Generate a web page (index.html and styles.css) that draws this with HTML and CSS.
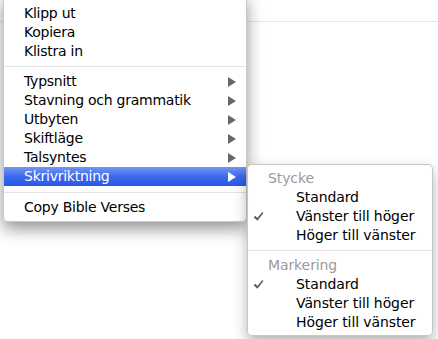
FILE: index.html
```html
<!DOCTYPE html>
<html lang="sv">
<head>
<meta charset="utf-8">
<link rel="stylesheet" href="styles.css">
</head>
<body>
<div class="page">
  <div class="ghost">Ingen markering.</div>
  <div class="rule"></div>
</div>

<div class="menu main">
  <div class="item">Klipp ut</div>
  <div class="item">Kopiera</div>
  <div class="item">Klistra in</div>
  <div class="sep"></div>
  <div class="item sub">Typsnitt<span class="arrow"></span></div>
  <div class="item sub">Stavning och grammatik<span class="arrow"></span></div>
  <div class="item sub">Utbyten<span class="arrow"></span></div>
  <div class="item sub">Skiftläge<span class="arrow"></span></div>
  <div class="item sub">Talsyntes<span class="arrow"></span></div>
  <div class="item sub active">Skrivriktning<span class="arrow"></span></div>
  <div class="sep sep2"></div>
  <div class="item">Copy Bible Verses</div>
</div>

<div class="menu submenu">
  <div class="head">Stycke</div>
  <div class="opt"><span class="check"></span>Standard</div>
  <div class="opt"><span class="check"><svg viewBox="0 0 10 10" width="11" height="11"><path d="M0.6 5.6 L2.1 4.3 L3.9 6.3 L8.5 1 L9.5 1.9 L4 8.9 Z" fill="#5a5a5a"/></svg></span>Vänster till höger</div>
  <div class="opt"><span class="check"></span>Höger till vänster</div>
  <div class="sep"></div>
  <div class="head">Markering</div>
  <div class="opt"><span class="check"><svg viewBox="0 0 10 10" width="11" height="11"><path d="M0.6 5.6 L2.1 4.3 L3.9 6.3 L8.5 1 L9.5 1.9 L4 8.9 Z" fill="#5a5a5a"/></svg></span>Standard</div>
  <div class="opt"><span class="check"></span>Vänster till höger</div>
  <div class="opt"><span class="check"></span>Höger till vänster</div>
</div>
</body>
</html>
```

FILE: styles.css
```css
html, body {
  margin: 0;
  padding: 0;
  background: #ffffff;
  width: 438px;
  height: 339px;
  overflow: hidden;
}

body {
  position: relative;
  font-family: "DejaVu Sans", "Lucida Grande", sans-serif;
  font-size: 14px;
  color: #000;
}

.page {
  display: flex;
  flex-direction: column;
}

.ghost {
  height: 8px;
  padding-left: 150px;
  font-size: 9px;
  font-weight: bold;
  line-height: 8px;
  color: #ececec;
}

.rule {
  margin-top: 13px;
  height: 1px;
  background: #e6e6e6;
}

.menu {
  position: absolute;
  background: rgba(255, 255, 255, 0.98);
  border: 1px solid rgba(0, 0, 0, 0.22);
  box-sizing: border-box;
}

.main {
  left: 3px;
  top: -6px;
  width: 244px;
  padding: 9px 0 4px;
  border-radius: 0 0 5px 5px;
  box-shadow: 0 7px 16px rgba(0, 0, 0, 0.42);
  letter-spacing: -0.25px;
}

.item {
  position: relative;
  height: 19px;
  line-height: 19px;
  padding-left: 20px;
  white-space: nowrap;
}

.item.active {
  color: #fff;
  background: linear-gradient(#7396f5, #3d6aeb 50%, #2858e7);
}

.arrow {
  position: absolute;
  right: 10px;
  top: 5px;
  width: 0;
  height: 0;
  border-left: 8px solid #686868;
  border-top: 5px solid transparent;
  border-bottom: 5px solid transparent;
}

.item.active .arrow {
  border-left-color: #fff;
}

.sep {
  height: 1px;
  background: #e2e2e2;
  margin: 5px 0 5px;
}

.sep2 {
  margin: 6px 0 5px;
}

.submenu {
  left: 247px;
  top: 164px;
  width: 186px;
  height: 172px;
  padding: 4px 0 4px;
  border-radius: 5px;
  box-shadow: 0 6px 14px rgba(0, 0, 0, 0.3);
  letter-spacing: -0.1px;
}

.head {
  height: 19px;
  line-height: 19px;
  padding-left: 20px;
  color: #9a9a9a;
}

.opt {
  display: flex;
  align-items: center;
  height: 19px;
  line-height: 19px;
  white-space: nowrap;
}

.check {
  display: flex;
  align-items: center;
  padding-left: 5px;
  width: 48px;
  box-sizing: border-box;
  height: 19px;
}
```
